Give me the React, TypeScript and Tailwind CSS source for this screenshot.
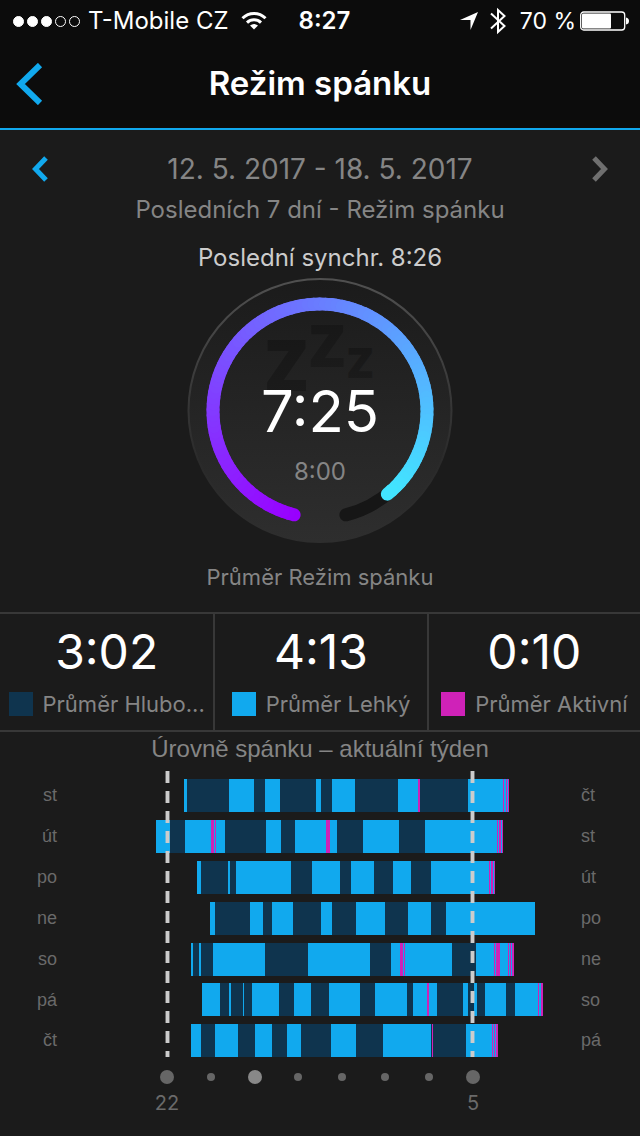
import React from 'react';

type Level = 'L' | 'D' | 'A';

interface Night {
  start: string;
  end: string;
  y: number;
  // each stage runs until the next one starts
  stages: [number, Level][];
  stop: number;
}

const levelFill: Record<Level, string> = {
  L: 'fill-[#11a9ee]',
  D: 'fill-[#0f344e]',
  A: 'fill-[#cf22b8]',
};

const nights: Night[] = [
  {
    start: 'st', end: 'čt', y: 8, stop: 359,
    stages: [[34, 'L'], [37, 'D'], [79, 'L'], [104, 'D'], [115, 'L'], [130, 'D'], [166, 'L'], [171, 'D'], [182, 'L'], [205, 'D'], [248, 'L'], [268, 'A'], [270, 'D'], [318, 'L'], [353, 'A'], [354, 'L'], [356, 'A'], [357, 'L'], [358, 'A']],
  },
  {
    start: 'út', end: 'st', y: 49, stop: 353,
    stages: [[6, 'L'], [20, 'D'], [35, 'L'], [61, 'A'], [64, 'L'], [65, 'A'], [66, 'L'], [75, 'D'], [116, 'L'], [131, 'D'], [145, 'L'], [176, 'A'], [180, 'L'], [187, 'D'], [213, 'L'], [249, 'D'], [275, 'L'], [347, 'A'], [348, 'L'], [349, 'A'], [351, 'L'], [352, 'A']],
  },
  {
    start: 'po', end: 'út', y: 90, stop: 345,
    stages: [[47, 'L'], [51, 'D'], [78, 'L'], [80, 'D'], [86, 'L'], [141, 'D'], [162, 'L'], [190, 'D'], [201, 'L'], [224, 'D'], [243, 'L'], [261, 'D'], [281, 'L'], [339, 'A'], [340, 'L'], [341, 'A'], [343, 'L'], [344, 'A']],
  },
  {
    start: 'ne', end: 'po', y: 131, stop: 385,
    stages: [[60, 'L'], [65, 'D'], [100, 'L'], [113, 'D'], [122, 'L'], [143, 'D'], [171, 'L'], [182, 'D'], [206, 'L'], [235, 'D'], [258, 'L'], [281, 'D'], [296, 'L']],
  },
  {
    start: 'so', end: 'ne', y: 172, stop: 364,
    stages: [[41, 'L'], [43, 'D'], [49, 'L'], [51, 'D'], [63, 'L'], [115, 'D'], [158, 'L'], [220, 'D'], [241, 'L'], [250, 'A'], [253, 'L'], [254, 'A'], [255, 'L'], [302, 'D'], [326, 'L'], [344, 'A'], [345, 'L'], [346, 'A'], [350, 'L'], [358, 'A'], [359, 'L'], [360, 'A'], [361, 'L'], [362, 'A']],
  },
  {
    start: 'pá', end: 'so', y: 212, stop: 393,
    stages: [[52, 'L'], [70, 'D'], [79, 'L'], [81, 'D'], [93, 'L'], [94, 'D'], [102, 'L'], [129, 'D'], [144, 'L'], [161, 'D'], [179, 'L'], [210, 'D'], [225, 'L'], [257, 'D'], [263, 'L'], [277, 'A'], [279, 'L'], [287, 'D'], [313, 'L'], [318, 'D'], [324, 'L'], [327, 'D'], [335, 'L'], [356, 'D'], [365, 'L'], [388, 'A'], [389, 'L'], [391, 'A']],
  },
  {
    start: 'čt', end: 'pá', y: 253, stop: 348,
    stages: [[41, 'L'], [51, 'D'], [65, 'L'], [88, 'D'], [105, 'L'], [122, 'D'], [137, 'L'], [151, 'D'], [181, 'L'], [206, 'D'], [233, 'L'], [281, 'D'], [282, 'A'], [283, 'D'], [316, 'L'], [342, 'A'], [343, 'L'], [344, 'A'], [345, 'L'], [346, 'A']],
  },
];

const stats = [
  { value: '3:02', label: 'Průměr Hlubo...', swatch: 'bg-[#0f344e]' },
  { value: '4:13', label: 'Průměr Lehký', swatch: 'bg-[#11a9ee]' },
  { value: '0:10', label: 'Průměr Aktivní', swatch: 'bg-[#cf22b8]' },
];

const hours = [17, 61, 105, 148, 192, 235, 279, 323];

// Point on the gauge ring, degrees clockwise from the top
const ringPoint = (deg: number) => {
  const rad = (deg * Math.PI) / 180;
  return `${(133 + 107 * Math.sin(rad)).toFixed(2)} ${(133 - 107 * Math.cos(rad)).toFixed(2)}`;
};

const arc = (from: number, to: number) => `M${ringPoint(from)}A107 107 0 0 1 ${ringPoint(to)}`;

const ringColor = (t: number) =>
  `rgb(${Math.round(153 - 87 * t)}, ${Math.round(228 * t)}, 255)`;

const RING_START = 194;
const RING_SWEEP = 307;
const RING_STEPS = 100;

const StatusBar: React.FC = () => (
  <div className="grid h-10 grid-cols-[1fr_auto_1fr] items-center pl-[13px] pr-1 pt-0.5 text-2xl text-white">
    <div className="flex items-center">
      <div className="flex gap-[3px] pr-2">
        {[0, 1, 2, 3, 4].map((i) => (
          <span key={i} className={`size-[11px] rounded-full border border-white ${i < 3 ? 'bg-white' : ''}`} />
        ))}
      </div>
      <span className="whitespace-nowrap">T-Mobile CZ</span>
      <svg width="26" height="20" viewBox="0 0 26 20" className="ml-3" fill="none" stroke="white" strokeWidth="3">
        <path d="M1.5 7.2C8 .8 18 .8 24.500 7.200" />
        <path d="M6 11.600C10 7.800 16 7.800 20 11.600" />
        <path d="M13 18.500 9 14.600Q13 11.200 17 14.600Z" fill="white" stroke="none" />
      </svg>
    </div>
    <span className="font-semibold">8:27</span>
    <div className="flex items-center justify-end pr-[7px]">
      <svg width="18" height="18" viewBox="0 0 18 18" fill="white">
        <path d="M18 0 10.500 18V8H0Z" />
      </svg>
      <svg width="16" height="28" viewBox="0 0 16 28" className="ml-3" fill="none" stroke="white" strokeWidth="2">
        <path d="M1 6.500 14.500 19 8 25V3L14.500 9 1 21.500" />
      </svg>
      <span className="ml-3.5 whitespace-nowrap text-[23px]">70 %</span>
      <svg width="49" height="20" viewBox="0 0 49 20" className="ml-1">
        <rect x=".7" y="1" width="44" height="18" rx="3" fill="none" stroke="white" strokeWidth="1.300" />
        <rect x="2" y="2.500" width="29" height="15" rx="1" fill="white" />
        <path d="M46 6.500q3 .5 3 3.500t-3 3.500z" fill="white" />
      </svg>
    </div>
  </div>
);

const SleepGauge: React.FC = () => (
  <svg width="266" height="266" viewBox="0 0 266 266" className="mx-auto block">
    <defs>
      <linearGradient id="dial" x1="0" y1="0" x2="0" y2="1">
        <stop offset="0" stopColor="#1b1b1b" />
        <stop offset="1" stopColor="#2e2e2e" />
      </linearGradient>
      <linearGradient id="rim" x1="0" y1="0" x2="0" y2="1">
        <stop offset="0" stopColor="#505050" />
        <stop offset=".7" stopColor="#2a2a2a" />
        <stop offset="1" stopColor="#2e2e2e" />
      </linearGradient>
      <linearGradient id="zzz" x1="0" y1="0" x2="0" y2="1">
        <stop offset="0" stopColor="#161616" />
        <stop offset="1" stopColor="#1c1c1c" />
      </linearGradient>
    </defs>
    <circle cx="133" cy="132.500" r="131.500" fill="url(#dial)" stroke="url(#rim)" strokeWidth="2" />
    <path d={arc(138, 166)} fill="none" stroke="#161616" strokeWidth="13" strokeLinecap="round" />
    {Array.from({ length: RING_STEPS }, (_, i) => {
      const from = RING_START + (RING_SWEEP * i) / RING_STEPS;
      const to = RING_START + (RING_SWEEP * (i + 1)) / RING_STEPS;
      return (
        <path
          key={i}
          d={arc(from, to)}
          fill="none"
          stroke={ringColor(i / (RING_STEPS - 1))}
          strokeWidth="13"
          strokeLinecap="round"
        />
      );
    })}
    <g fill="url(#zzz)" className="font-['Open_Sans',sans-serif] font-extrabold">
      <text x="78" y="113" fontSize="70">Z</text>
      <text x="122" y="89" fontSize="59">Z</text>
      <text x="160" y="100" fontSize="43">Z</text>
    </g>
    <text x="133" y="154" fontSize="58" textAnchor="middle" fill="#ffffff">7:25</text>
    <text x="133" y="202" fontSize="24" textAnchor="middle" fill="#858585">8:00</text>
  </svg>
);

const SleepChart: React.FC = () => (
  <div className="flex font-['Liberation_Sans',sans-serif] text-lg text-[#6a6a6a]">
    <div className="mt-1 flex h-[286px] w-[57px] flex-col justify-around text-right">
      {nights.map((n) => (
        <span key={n.y}>{n.start}</span>
      ))}
    </div>
    <svg viewBox="0 0 400 350" className="ml-[93px] mr-[31px] min-w-0 flex-1">
      {nights.map((n) => (
        <g key={n.y} shapeRendering="crispEdges">
          {n.stages.map(([x, level], i) => (
            <rect
              key={x}
              x={x}
              y={n.y}
              width={(n.stages[i + 1]?.[0] ?? n.stop) - x}
              height="33"
              className={levelFill[level]}
            />
          ))}
        </g>
      ))}
      {[17.5, 322.5].map((x) => (
        <g key={x} strokeDasharray="12 8" stroke="#cccccc">
          <path d={`M${x} 0V286`} strokeWidth="5" strokeOpacity=".45" />
          <path d={`M${x} 0V286`} strokeWidth="3" />
        </g>
      ))}
      {hours.map((x, i) => (
        <circle
          key={x}
          cx={x}
          cy="306"
          r={i === 0 || i === 2 || i === 7 ? 7 : 4}
          fill={i === 2 ? '#888888' : '#666666'}
        />
      ))}
      <g fill="#6a6a6a" fontSize="20" textAnchor="middle" className="font-['Inter',sans-serif]">
        <text x="17" y="339">22</text>
        <text x="323" y="339">5</text>
      </g>
    </svg>
    <div className="mt-1 flex h-[286px] w-[59px] flex-col justify-around">
      {nights.map((n) => (
        <span key={n.y}>{n.end}</span>
      ))}
    </div>
  </div>
);

const App: React.FC = () => {
  return (
    <div className="min-h-screen bg-[#1b1b1b] font-['Inter',sans-serif] text-[#858585]">
      <header className="border-b-2 border-[#11a9ee] bg-[#0c0c0c]">
        <StatusBar />
        <div className="grid h-[88px] grid-cols-[1fr_auto_1fr] items-center px-4">
          <button aria-label="Zpět" className="justify-self-start">
            <svg width="27" height="42" viewBox="0 0 27 42" fill="none" stroke="#11a9ee" strokeWidth="6">
              <path d="M24 2 4.500 21 24 40" />
            </svg>
          </button>
          <h1 className="text-[33px] font-semibold text-white">Režim spánku</h1>
        </div>
      </header>

      <main>
        {/* Period */}
        <div className="flex items-center justify-between px-8 pt-[21px] leading-9">
          <button aria-label="Předchozí týden">
            <svg width="16" height="26" viewBox="0 0 16 26" fill="none" stroke="#11a9ee" strokeWidth="5">
              <path d="M14 2 3.500 13 14 24" />
            </svg>
          </button>
          <span className="text-[28px]">12. 5. 2017 - 18. 5. 2017</span>
          <button aria-label="Další týden">
            <svg width="16" height="26" viewBox="0 0 16 26" fill="none" stroke="#6f6f6f" strokeWidth="5">
              <path d="M2 2 12.500 13 2 24" />
            </svg>
          </button>
        </div>
        <p className="pt-[7px] text-center text-2xl">Posledních 7 dní - Režim spánku</p>
        <p className="pb-1 pt-4 text-center text-2xl text-[#cccccc]">Poslední synchr. 8:26</p>

        <SleepGauge />
        <p className="pb-[19px] pt-[17px] text-center text-[22px] leading-8">Průměr Režim spánku</p>

        {/* Averages */}
        <div className="grid grid-cols-3 border-y-2 border-[#383838]">
          {stats.map((s) => (
            <div key={s.label} className="flex h-[116px] flex-col items-center border-[#383838] pt-2 not-first:border-l-2">
              <span className="text-5xl leading-[60px] text-white">{s.value}</span>
              <span className="flex items-center gap-2.5 whitespace-nowrap pt-1.5 text-[22px] leading-8">
                <i className={`size-6 ${s.swatch}`} />
                {s.label}
              </span>
            </div>
          ))}
        </div>

        <h2 className="pb-1.5 pt-px text-center font-['Liberation_Sans',sans-serif] text-2xl leading-8">
          Úrovně spánku – aktuální týden
        </h2>
        <SleepChart />
      </main>
    </div>
  );
};

export default App;
